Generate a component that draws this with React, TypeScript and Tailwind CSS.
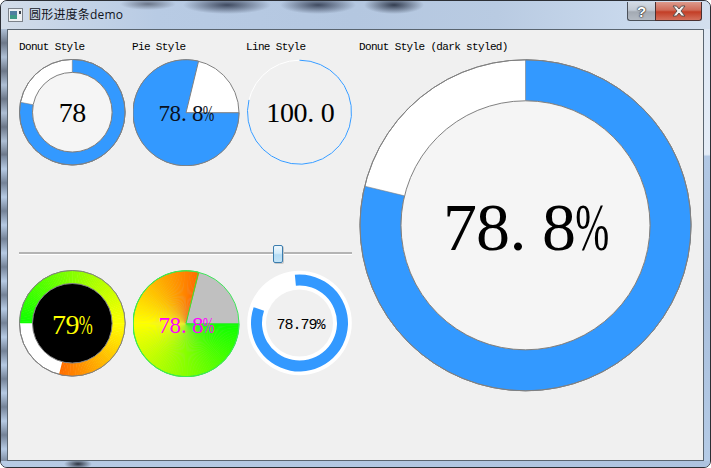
import React from "react";

const BLUE = "#3399ff";
const GRAY = "#808080";
const FILL = 283.68;

const pt = (cx: number, cy: number, r: number, deg: number) => {
	const a = (deg * Math.PI) / 180;
	return `${cx + r * Math.sin(a)} ${cy - r * Math.cos(a)}`;
};

// angles are clockwise from 12 o'clock
const ringPath = (cx: number, cy: number, ro: number, ri: number, a0: number, a1: number) => {
	const large = a1 - a0 > 180 ? 1 : 0;
	return `M${pt(cx, cy, ro, a0)} A${ro} ${ro} 0 ${large} 1 ${pt(cx, cy, ro, a1)} L${pt(cx, cy, ri, a1)} A${ri} ${ri} 0 ${large} 0 ${pt(cx, cy, ri, a0)} Z`;
};

const arcPath = (cx: number, cy: number, r: number, a0: number, a1: number) => {
	const large = a1 - a0 > 180 ? 1 : 0;
	return `M${pt(cx, cy, r, a0)} A${r} ${r} 0 ${large} 1 ${pt(cx, cy, r, a1)}`;
};

const wedgePath = (cx: number, cy: number, r: number, a0: number, a1: number) => {
	const large = a1 - a0 > 180 ? 1 : 0;
	return `M${cx} ${cy} L${pt(cx, cy, r, a0)} A${r} ${r} 0 ${large} 1 ${pt(cx, cy, r, a1)} Z`;
};

const conic = (t: number) => {
	if (t < 0.5) return `rgb(${Math.round(16 + 239 * t * 2)},255,0)`;
	return `rgb(255,${Math.round(255 * (1 - (t - 0.5) * 2))},0)`;
};

const steps = Array.from({ length: 142 }, (_, i) => i);

// the Qt widgets use a font with half-width digits
const Digits: React.FC<{ text: string }> = ({ text }) => (
	<span className="flex font-['Liberation_Serif',serif] leading-none">
		{text.split("").map((c, i) => (
			<span
				key={i}
				className={`flex w-[0.485em] ${c === "." ? "justify-start" : "justify-center"}`}
			>
				<span className={c === "%" ? "scale-x-[0.6]" : ""}>{c}</span>
			</span>
		))}
	</span>
);

const Gauge: React.FC<{ size: number; children: React.ReactNode; label: React.ReactNode }> = ({
	size,
	children,
	label,
}) => (
	<div className="grid place-items-center" style={{ width: size, height: size }}>
		<svg width={size} height={size} className="col-start-1 row-start-1">
			{children}
		</svg>
		<div className="col-start-1 row-start-1">{label}</div>
	</div>
);

const Donut: React.FC<{ size: number; cx: number; cy: number; ro: number; ri: number; fill: number }> = ({
	size,
	cx,
	cy,
	ro,
	ri,
	fill,
}) => (
	<svg width={size} height={size} className="col-start-1 row-start-1">
		<circle cx={cx} cy={cy} r={ro} fill="#fff" stroke={GRAY} />
		<path d={ringPath(cx, cy, ro, ri, 0, fill)} fill={BLUE} stroke={GRAY} strokeWidth={0.6} />
		<circle cx={cx} cy={cy} r={ro} fill="none" stroke={GRAY} />
		<circle cx={cx} cy={cy} r={ri} fill="#f5f5f5" stroke={GRAY} />
	</svg>
);

const Label: React.FC<{ children: React.ReactNode; className?: string }> = ({ children, className }) => (
	<div className={`h-3 text-[11px] leading-3 tracking-[-0.65px] text-black font-['Liberation_Mono',monospace] ${className ?? ""}`}>
		{children}
	</div>
);

const TitleButtons: React.FC = () => (
	<div className="ml-auto mr-2 mt-px flex h-[19px] self-start">
		<div className="flex w-[28px] items-center justify-center rounded-bl-[3px] border-b border-l border-[#4b515a] bg-[linear-gradient(#d3dbe5_0%,#c2cad4_45%,#a3aab3_55%,#b3bac3_100%)]">
			<span className="text-[15px] font-bold leading-none text-white font-['Liberation_Sans',sans-serif] [text-shadow:0_0_1px_#222,0_0_1px_#222,0_0_2px_#333]">
				?
			</span>
		</div>
		<div className="flex w-[47px] items-center justify-center rounded-br-[3px] border-b border-l border-r border-[#4b3030] bg-[linear-gradient(#dc9a8c_0%,#cf6b58_45%,#c33e26_55%,#d4705c_100%)]">
			<svg width="16" height="12" viewBox="0 0 16 12">
				<path
					d="M2 1h3.5L8 4l2.5-3H14l-4 5 4 5h-3.5L8 8l-2.5 3H2l4-5z"
					fill="#f4f1ef"
					stroke="#4d4a4a"
					strokeWidth="0.9"
				/>
			</svg>
		</div>
	</div>
);

const AppIcon: React.FC = () => (
	<svg width="15" height="14" viewBox="0 0 15 14" className="shrink-0">
		<rect x="0.5" y="0.5" width="14" height="13" fill="#eef1f3" stroke="#7c828a" />
		<rect x="2" y="3" width="7" height="4" fill="#4f7fa0" />
		<rect x="2" y="7" width="7" height="4" fill="#3f9a86" />
		<rect x="11" y="3" width="2" height="3" fill="#39424c" />
	</svg>
);

export default function App() {
	return (
		<div className="flex h-[468px] w-[711px] flex-col overflow-hidden rounded-[7px] border border-[#2c2f35] bg-[#b9cde6]">
			<div className="flex h-[28px] shrink-0 items-center bg-[radial-gradient(ellipse_44px_9px_at_226px_4px,#3f4a60,transparent),radial-gradient(ellipse_38px_9px_at_317px_4px,#3f4a60,transparent),radial-gradient(ellipse_30px_9px_at_393px_4px,#333d50,transparent),radial-gradient(ellipse_28px_6px_at_147px_3px,#6b7689,transparent),linear-gradient(90deg,#d3dde9_0%,#c5d4e7_10%,#b8cbe4_22%,#b4c7e0_50%,#b9cbe2_70%,#c8d8ec_88%,#d3dfee_100%)] pl-[7px]">
				<AppIcon />
				<span className="ml-[6px] text-[12px] leading-none tracking-[0.2px] text-[#10131c] font-['Open_Sans','Noto_Sans_CJK_SC',sans-serif]">
					圆形进度条demo
				</span>
				<TitleButtons />
			</div>
			<div className="flex min-h-0 flex-1">
				<div className="w-[6px] shrink-0 bg-[linear-gradient(#9aa1ab_0%,#8f98a5_29%,#b4c8e2_29.5%,#b4c8e2_100%)]">
					<div className="h-full w-full bg-[repeating-linear-gradient(#b7cbe4_0px,#5f6b7e_14px,#b7cbe4_28px)] opacity-75"></div>
				</div>
				<div className="flex min-w-0 flex-1 gap-[7px] border border-[#5a6570] bg-[#f0f0f0] pl-[11px] pt-[11px]">
					<div className="w-[333px] shrink-0">
						<div className="grid grid-cols-[107px_107px_107px] gap-x-[7px]">
							<Label>Donut Style</Label>
							<Label className="-ml-px">Pie Style</Label>
							<Label className="-ml-px">Line Style</Label>
						</div>
						<div className="mt-[6px] grid grid-cols-[107px_107px_107px] gap-x-[7px]">
							<div className="grid h-[107px] w-[107px] place-items-center">
								<Donut size={107} cx={53.3} cy={53.2} ro={52.8} ri={39.8} fill={280.8} />
								<div className="col-start-1 row-start-1 text-[28px] text-black">
									<Digits text="78" />
								</div>
							</div>
							<Gauge
								size={107}
								label={
									<div className="pt-[2px] text-[23px] text-[#0a1020]">
										<Digits text="78.8%" />
									</div>
								}
							>
								<circle cx={53} cy={53.7} r={53} fill="#fff" stroke={GRAY} />
								<path d={wedgePath(53, 53.7, 53, 90, 90 + FILL)} fill={BLUE} stroke={GRAY} />
							</Gauge>
							<Gauge
								size={107}
								label={
									<div className="text-[28px] text-black">
										<Digits text="100.0" />
									</div>
								}
							>
								<circle cx={52.5} cy={53.2} r={52} fill="none" stroke="#fff" />
								<path d={arcPath(52.5, 53.2, 52, 0, FILL)} fill="none" stroke={BLUE} />
							</Gauge>
						</div>
						<div className="relative mt-[78px] h-5 pt-[8px]">
							<div className="h-[3px] border-t-2 border-[#b4b4b4] bg-white"></div>
							<div className="absolute left-[254px] top-[1px] h-[18px] w-[10px] rounded-[2px] border border-[#3b7dae] bg-[linear-gradient(#eef7fd_0%,#d4ecfa_45%,#b3dcf5_55%,#c2e3f7_100%)] shadow-[1px_1px_0_#c8c8c8]"></div>
						</div>
						<div className="mt-[6px] grid grid-cols-[107px_107px_107px] gap-x-[7px]">
							<Gauge
								size={107}
								label={
									<div className="pt-[2px] text-[28px] text-[#ffff00]">
										<Digits text="79%" />
									</div>
								}
							>
								<circle cx={53.3} cy={53.3} r={52.8} fill="#fff" stroke={GRAY} />
								{steps.map((i) => (
									<path
										key={i}
										d={ringPath(53.3, 53.3, 52.8, 39.8, 270 + i * 2, 270 + (i + 1) * 2 + 0.6)}
										fill={conic((i * 2) / 360)}
									/>
								))}
								<circle cx={53.3} cy={53.3} r={52.8} fill="none" stroke={GRAY} />
								<circle cx={53.3} cy={53.3} r={39.8} fill="#000" stroke={GRAY} />
							</Gauge>
							<Gauge
								size={107}
								label={
									<div className="pt-1 text-[23px] text-[#ff00ff]">
										<Digits text="78.8%" />
									</div>
								}
							>
								<circle cx={53} cy={53.7} r={53} fill="#c0c0c0" />
								{steps.map((i) => (
									<path
										key={i}
										d={wedgePath(53, 53.7, 53, 90 + i * 2, 90 + (i + 1) * 2 + 0.6)}
										fill={conic((i * 2) / 360)}
									/>
								))}
								<path d={wedgePath(53, 53.7, 53, 90, 90 + FILL)} fill="none" stroke="#33e833" />
								<circle cx={53} cy={53.7} r={53} fill="none" stroke="#3fe85a" />
							</Gauge>
							<Gauge
								size={107}
								label={
									<div className="pt-[3px] text-[15px] leading-none tracking-[-1px] text-black font-['Liberation_Mono',monospace]">
										78.79%
									</div>
								}
							>
								<circle cx={52.5} cy={53} r={52.3} fill="#fff" />
								<path d={ringPath(52.5, 53, 48.5, 37.5, -5.5, 289)} fill={BLUE} />
								<circle cx={52.5} cy={53} r={33.5} fill="#f0f0f0" />
							</Gauge>
						</div>
					</div>
					<div className="w-[334px] shrink-0">
						<Label>Donut Style (dark styled)</Label>
						<div className="mt-[6px] grid h-[334px] w-[334px] place-items-center">
							<Donut size={334} cx={166.5} cy={166.3} ro={165.5} ri={124.5} fill={FILL} />
							<div className="col-start-1 row-start-1 pt-[2px] text-[68px] text-black">
								<Digits text="78.8%" />
							</div>
						</div>
					</div>
				</div>
				<div className="w-[6px] shrink-0 bg-[linear-gradient(#dfe8f4_0%,#e4ecf6_29%,#b2c8e4_29.5%,#a9bfdc_60%,#b5cbe6_100%)]"></div>
			</div>
			<div className="h-[6px] shrink-0 bg-[radial-gradient(ellipse_14px_5px_at_77px_3px,#2c3340,transparent),linear-gradient(90deg,#b7cbe4_0%,#aec3df_100%)]"></div>
		</div>
	);
}
